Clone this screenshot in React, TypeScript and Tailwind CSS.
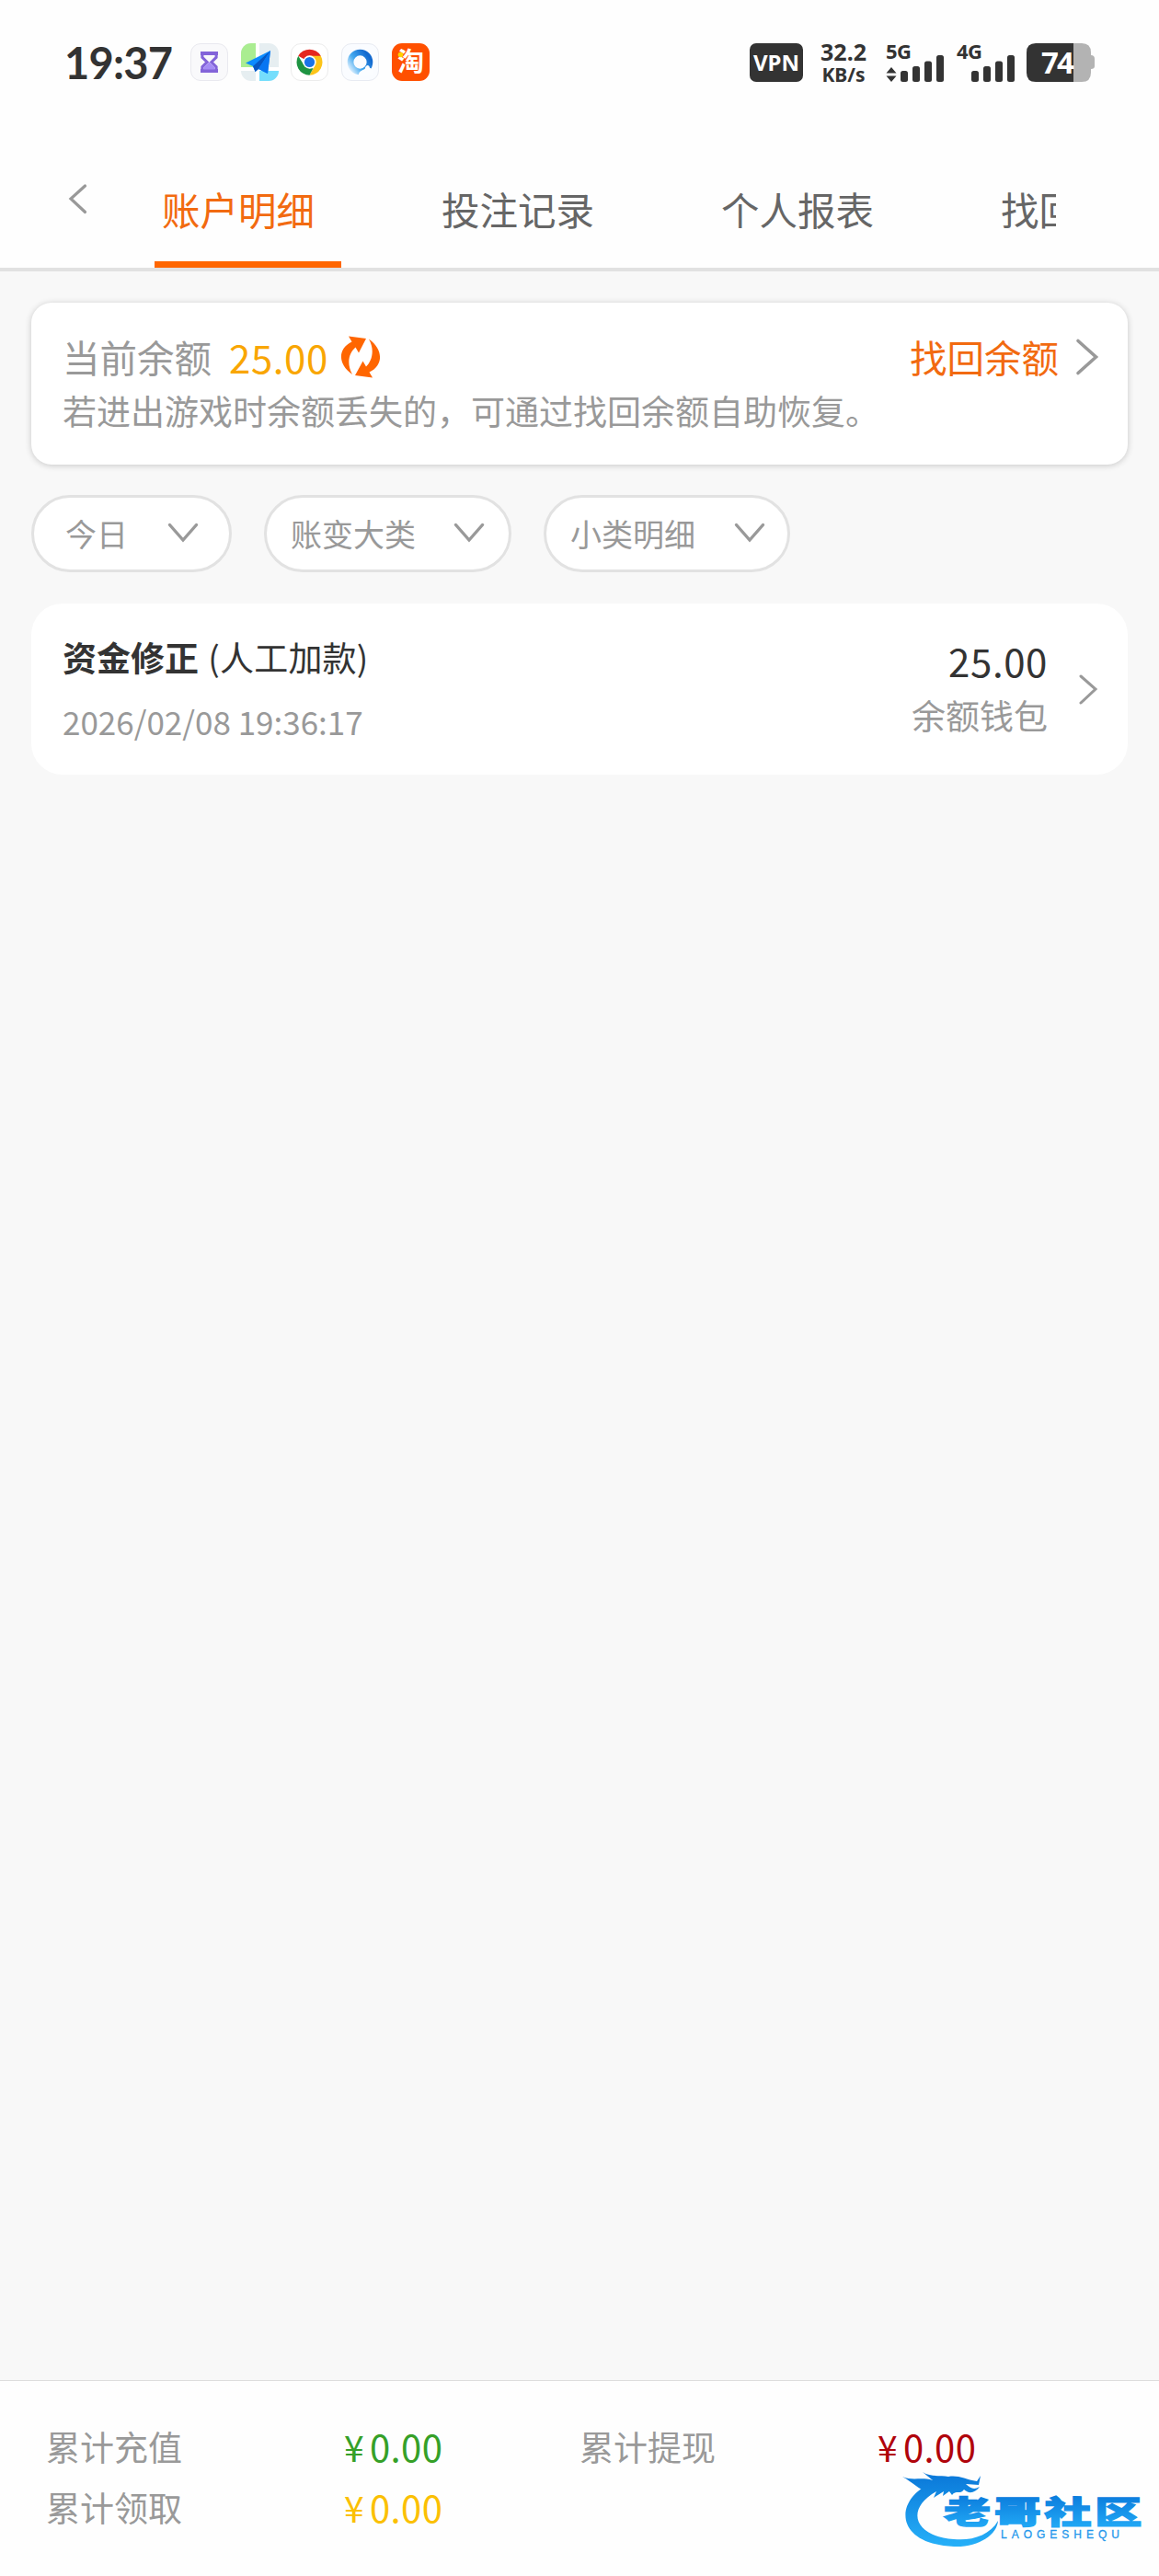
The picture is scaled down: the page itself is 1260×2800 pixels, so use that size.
import type { ReactNode } from "react";

const tabs = ["账户明细", "投注记录", "个人报表", "找回余额"];

const filters = [
  { label: "今日", box: "w-[218px] pl-[34px] pr-[33px]" },
  { label: "账变大类", box: "w-[269px] pl-[26px] pr-[26px]" },
  { label: "小类明细", box: "w-[268px] pl-[26px] pr-[24px]" },
];

function AppIcon({ children, className = "" }: { children: ReactNode; className?: string }) {
  return (
    <div className={`size-[41px] rounded-[11px] ${className}`}>
      <svg viewBox="0 0 41 41" className="size-full overflow-visible">
        {children}
      </svg>
    </div>
  );
}

function Signal({ label, arrows }: { label: string; arrows?: boolean }) {
  return (
    <svg viewBox="0 0 64 44" className="w-16 h-11 overflow-visible" fill="#333333">
      <text x="0" y="17" fontSize="22" fontWeight="700" fontFamily="Noto Sans" textLength="28">
        {label}
      </text>
      {arrows && <path d="M6 26 L11.5 32.5 H0.5 Z M6 42 L11.5 35.5 H0.5 Z" />}
      <rect x="16" y="30" width="8" height="12" rx="2.500" />
      <rect x="29" y="25" width="8" height="17" rx="2.500" />
      <rect x="42" y="19.500" width="8" height="22.500" rx="2.500" />
      <rect x="55" y="13" width="8" height="29" rx="2.500" />
    </svg>
  );
}

function StatusBar() {
  return (
    <div className="h-[135px] pt-[47px] pl-[70px] pr-[70px] flex items-start justify-between text-[#333333]">
      <div className="flex items-center h-[41px]">
        <div className="w-[137px] pt-0.5 font-['Lato',sans-serif] font-bold text-[47px] leading-[41px] tracking-[-0.8px]">
          19:37
        </div>
        <div className="flex gap-[13.7px]">
          <AppIcon className="border border-[#e9e9ef] bg-[#f9f9fb]">
            <path d="M10.500 10.500H30.500M10.500 30.500H30.500" stroke="#8364d9" strokeWidth="4" />
            <path d="M12.500 11V15L18 20.500L12.500 26V30H28.500V26L23 20.500L28.500 15V11" fill="none" stroke="#8364d9" strokeWidth="3.200" />
            <path d="M14 29V26.500L20.500 20.500L27 26.500V29Z" fill="#a58cf5" />
          </AppIcon>
          <AppIcon className="bg-[#e6eef1] overflow-hidden">
            <rect width="16" height="26" fill="#aaed91" />
            <rect x="20" y="29" width="21" height="12" fill="#75defc" />
            <path d="M18 0V41M0 28H41" stroke="#fff" strokeWidth="4" />
            <path d="M32 8L5 21.500L13 25L15.500 31L19 28L29 33Z" fill="#0b8bff" />
            <path d="M32 8L13 25L15.500 31L19 28Z" fill="#0757c2" />
            <path d="M32 8L19 28L29 33Z" fill="#0876f2" />
          </AppIcon>
          <AppIcon className="border border-[#ececec] bg-white">
            <path d="M20.500 20.500L7.600 13.300A15 15 0 0 1 33.400 13.300Z" fill="#e52620" />
            <path d="M20.500 13.300H33.400A15 15 0 0 1 20.500 35.500L26.800 24.200Z" fill="#fcc419" />
            <path d="M7.600 13.300L14.300 24.100L20.500 27.700H24.700L20.500 35.500A15 15 0 0 1 7.600 13.300Z" fill="#1e9442" />
            <circle cx="20.500" cy="20.500" r="7.500" fill="#fff" />
            <circle cx="20.500" cy="20.500" r="5.900" fill="#1a73e8" />
          </AppIcon>
          <AppIcon className="border border-[#e8ebf2] bg-[#fafcff]">
            <defs>
              <linearGradient id="ring" x1="0" y1="1" x2="1" y2="0.300">
                <stop offset="0" stopColor="#e4f3ff" />
                <stop offset="0.45" stopColor="#42a8ef" />
                <stop offset="1" stopColor="#1269cf" />
              </linearGradient>
            </defs>
            <circle cx="20.500" cy="20.500" r="11" fill="none" stroke="url(#ring)" strokeWidth="7" />
            <path d="M19 36C18 31 23 30 26 28C27 23 31 23 31.500 27C36 28 37 36 32 36Z" fill="#fbfdff" />
          </AppIcon>
          <AppIcon className="bg-[#ff5000]">
            <text x="6" y="30.500" fontSize="29" fontWeight="700" fill="#fff" fontFamily="Noto Sans CJK SC">
              淘
            </text>
            <circle cx="9.500" cy="12.500" r="2.800" fill="#ffd200" />
          </AppIcon>
        </div>
      </div>

      <div className="flex items-start">
        <div className="w-[58px] h-[42px] rounded-[7px] bg-[#333333] text-white font-['Noto_Sans',sans-serif] font-bold text-[24px] leading-[42px] text-center">
          VPN
        </div>
        <div className="ml-[17px] -mt-[3px] w-[54px] font-['Noto_Sans',sans-serif] font-bold text-center whitespace-nowrap">
          <div className="text-[25px] leading-[25px]">32.2</div>
          <div className="text-[21px] leading-[24px]">KB/s</div>
        </div>
        <div className="ml-[19px]">
          <Signal label="5G" arrows />
        </div>
        <div className="ml-[13px]">
          <Signal label="4G" />
        </div>
        <svg viewBox="0 0 74 42" className="ml-3 w-[74px] h-[42px] overflow-visible">
          <path d="M50 0H60Q70 0 70 10V13Q74 13 74 17V25Q74 28 70 28V32Q70 42 60 42H50Z" fill="#b3b3b3" />
          <path d="M10 0H51V42H10Q0 42 0 32V10Q0 0 10 0Z" fill="#333333" />
          <text x="16" y="33" fontSize="33" fontWeight="700" fill="#fff" fontFamily="Noto Sans" textLength="36">
            74
          </text>
        </svg>
      </div>
    </div>
  );
}

function Header() {
  return (
    <div className="h-[160px] border-b-4 border-[#e1e1e1] flex">
      <svg viewBox="0 0 24 36" className="ml-[73px] mt-[63px] w-6 h-9" fill="none">
        <path d="M19.500 4L4 18L19.500 32.500" stroke="#999999" strokeWidth="3.200" strokeLinecap="round" />
      </svg>
      <div className="ml-[71px] w-[980px] flex overflow-hidden">
        {tabs.map((tab, i) => (
          <div key={tab} className="w-[304px] shrink-0">
            <div
              className={`h-[156px] w-[203px] pl-2 pt-[63px] text-[41.500px] leading-[58px] whitespace-nowrap ${
                i === 0 ? "border-b-[7px] border-[#ff6600] text-[#f26a10]" : "text-[#666666]"
              }`}
            >
              {tab}
            </div>
          </div>
        ))}
      </div>
    </div>
  );
}

function BalanceCard() {
  return (
    <div className="h-[176px] rounded-[22px] bg-white shadow-[0_1px_7px_rgba(0,0,0,0.2)] pl-[34px] pr-[31px] pt-[29px]">
      <div className="flex items-center h-[60px]">
        <span className="text-[40.500px] text-[#999999]">当前余额</span>
        <span className="ml-[19px] text-[42px] tracking-[0.6px] text-[#f9a602]">25.00</span>
        <svg viewBox="0 0 44 46" className="ml-[13px] -mt-px w-11 h-[46px]" fill="#ff6600">
          <path d="M9 0.500L28 3L20 18.500L16.500 12.500C10 18 6 29 13 42C-3 31 -3 14 12.500 6.500Z" />
          <path d="M35 45.500L16 43L24.500 27.500L28 33.500C34 28 38 16 31 3.500C47 15 47 32 31.500 39.500Z" />
        </svg>
        <span className="ml-auto text-[40.500px] text-[#f26a10]">找回余额</span>
        <svg viewBox="0 0 26 42" className="ml-[18px] w-[26px] h-[42px]" fill="none">
          <path d="M3 3.500L22.500 21L3 38.500" stroke="#999999" strokeWidth="3.600" strokeLinecap="round" />
        </svg>
      </div>
      <div className="pt-0.5 text-[37px] leading-[52px] text-[#999999]">
        若进出游戏时余额丢失的，可通过找回余额自助恢复。
      </div>
    </div>
  );
}

function Filters() {
  return (
    <div className="mt-[33px] flex gap-[35px]">
      {filters.map((f) => (
        <div
          key={f.label}
          className={`h-[84px] rounded-full border-[3px] border-[#e2e2e2] bg-white flex items-center justify-between text-[34px] text-[#999999] ${f.box}`}
        >
          {f.label}
          <svg viewBox="0 0 34 22" className="w-[34px] h-[22px] -mt-[3px]" fill="none">
            <path d="M2.500 2.500L17 19L31.500 2.500" stroke="#999999" strokeWidth="3.400" strokeLinecap="round" />
          </svg>
        </div>
      ))}
    </div>
  );
}

function RecordRow() {
  return (
    <div className="mt-[34px] h-[186px] rounded-[34px] bg-white pl-[34px] pr-[32px] flex">
      <div className="pt-[31px] text-[#333333]">
        <div className="text-[37px] leading-[54px]">
          <b>资金修正</b> <span className="ml-0.5 tracking-[0.2px]">(人工加款)</span>
        </div>
        <div className="mt-[18px] text-[35px] leading-[50px] text-[#999999]">2026/02/08 19:36:17</div>
      </div>
      <div className="ml-auto pt-[33px] text-right">
        <div className="text-[42px] leading-[58px] tracking-[0.6px] text-[#333333]">25.00</div>
        <div className="mt-[3px] text-[37px] leading-[54px] text-[#999999]">余额钱包</div>
      </div>
      <svg viewBox="0 0 22 34" className="ml-[33px] mt-[76px] w-[22px] h-[34px]" fill="none">
        <path d="M3 3L19 17L3 32" stroke="#999999" strokeWidth="3" strokeLinecap="round" />
      </svg>
    </div>
  );
}

function Total({ label, value, color }: { label: string; value: string; color: string }) {
  return (
    <div className="w-[580px] flex items-center h-[66px]">
      <span className="w-[324px] text-[37px] text-[#999999]">{label}</span>
      <span className={`flex items-baseline -mt-px ${color}`}>
        <span className="text-[39px] w-[28px]">¥</span>
        <span className="text-[40px] tracking-[0.4px]">{value}</span>
      </span>
    </div>
  );
}

function Watermark() {
  return (
    <svg viewBox="0 0 264 90" className="absolute left-[980px] bottom-[28px] w-[264px] h-[90px]">
      <defs>
        <linearGradient id="wave" x1="0" y1="0" x2="0" y2="90" gradientUnits="userSpaceOnUse">
          <stop offset="0" stopColor="#0873d6" />
          <stop offset="1" stopColor="#27b3fa" />
        </linearGradient>
        <linearGradient id="name" x1="0" y1="-32" x2="0" y2="4" gradientUnits="userSpaceOnUse">
          <stop offset="0" stopColor="#0c7ddd" />
          <stop offset="1" stopColor="#21a8f5" />
        </linearGradient>
      </defs>
      <path
        d="M33 17C-8 34 -9 83 57 86C84 87 104 73 105 58C96 74 76 80 57 78C12 75 3 43 42 24Z"
        fill="url(#wave)"
      />
      <path
        d="M1 10C12 15 22 10 34 14L23 5C32 11 43 8 51 10C62 8 69 13 82 15L86 9L84 19L70 18C75 22 78 25 85 21C80 28 73 29 68 24C64 30 59 24 55 30L52 26L45 31L46 26L35 33L38 26L28 27C18 23 12 16 1 10Z"
        fill="url(#wave)"
      />
      <text
        transform="translate(46 61) scale(1.380 0.930)"
        fontSize="37"
        fontWeight="900"
        fontFamily="Noto Sans CJK SC"
        textLength="156"
        fill="url(#name)"
        stroke="url(#name)"
        strokeWidth="1.500"
      >
        老哥社区
      </text>
      <text
        x="108"
        y="77"
        fontSize="12"
        fontFamily="Liberation Sans"
        textLength="129"
        fill="#2397ec"
        stroke="#2397ec"
        strokeWidth="0.300"
      >
        LAOGESHEQU
      </text>
    </svg>
  );
}

export default function App() {
  return (
    <div className="w-[1260px] h-[2800px] bg-[#f8f8f8] flex flex-col font-['Noto_Sans_CJK_SC',sans-serif] leading-none">
      <div className="bg-[#fefefe]">
        <StatusBar />
        <Header />
      </div>
      <div className="flex-1 px-[34px] pt-[34px]">
        <BalanceCard />
        <Filters />
        <RecordRow />
      </div>
      <div className="relative h-[213px] border-t border-[#dddddd] bg-[#fefefe] pl-[50px] pt-[38px] flex flex-wrap content-start">
        <Total label="累计充值" value="0.00" color="text-[#35a028]" />
        <Total label="累计提现" value="0.00" color="text-[#b0040b]" />
        <Total label="累计领取" value="0.00" color="text-[#fbc003]" />
        <Watermark />
      </div>
    </div>
  );
}
